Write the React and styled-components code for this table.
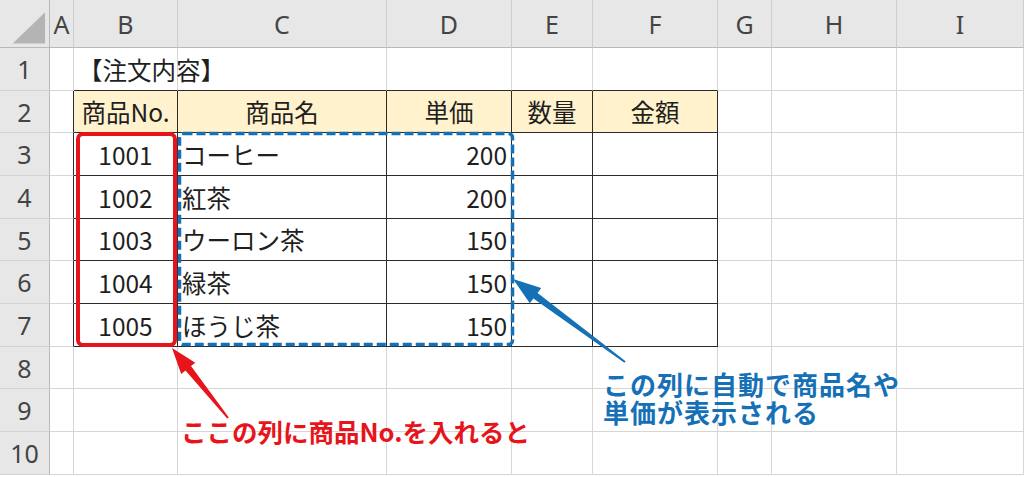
import styled, { createGlobalStyle } from "styled-components";

const GlobalStyle = createGlobalStyle`
  html, body {
    margin: 0;
    padding: 0;
    background: #ffffff;
    overflow: hidden;
  }
  body {
    font-family: "Noto Sans CJK JP", "Noto Sans", sans-serif;
  }
`;

const COLS = ["", "A", "B", "C", "D", "E", "F", "G", "H", "I"];
const COL_WIDTHS = [50, 24, 104, 209, 125, 81, 125, 54, 125, 127];
const ROW_HEIGHTS = [48, 43, 42, 43, 43, 42, 43, 43, 42, 43, 43];

// cell contents keyed by row number, then column index
const DATA = {
  1: { 2: { text: "【注文内容】", align: "left" } },
  2: {
    2: { text: "商品No.", align: "center" },
    3: { text: "商品名", align: "center" },
    4: { text: "単価", align: "center" },
    5: { text: "数量", align: "center" },
    6: { text: "金額", align: "center" },
  },
  3: { 2: { text: "1001" }, 3: { text: "コーヒー" }, 4: { text: "200" } },
  4: { 2: { text: "1002" }, 3: { text: "紅茶" }, 4: { text: "200" } },
  5: { 2: { text: "1003" }, 3: { text: "ウーロン茶" }, 4: { text: "150" } },
  6: { 2: { text: "1004" }, 3: { text: "緑茶" }, 4: { text: "150" } },
  7: { 2: { text: "1005" }, 3: { text: "ほうじ茶" }, 4: { text: "150" } },
};

const ALIGN_BY_COL = { 2: "center", 3: "left", 4: "right" };

const boxed = (r, c) => r >= 2 && r <= 7 && c >= 2 && c <= 6;

const Sheet = styled.div`
  position: relative;
  display: grid;
  grid-template-columns: ${COL_WIDTHS.map((w) => w + "px").join(" ")};
  grid-template-rows: ${ROW_HEIGHTS.map((h) => h + "px").join(" ")};
  width: 1024px;
  height: 477px;
  overflow: hidden;
`;

const Cell = styled.div`
  box-sizing: border-box;
  display: flex;
  align-items: center;
  justify-content: ${(p) =>
    p.$align === "right" ? "flex-end" : p.$align === "center" ? "center" : "flex-start"};
  padding: 0 4px;
  white-space: nowrap;
  overflow: visible;
  font-size: 24.5px;
  color: #1f1f1f;
  background: ${(p) => (p.$gold ? "#fff2cc" : "#ffffff")};
  border-right: 1px solid ${(p) => (p.$darkRight ? "#2a2a2a" : "#d6d6d6")};
  border-bottom: 1px solid ${(p) => (p.$darkBottom ? "#2a2a2a" : "#d6d6d6")};
  position: relative;
  z-index: ${(p) => (p.$overflow ? 1 : 0)};
`;

const ColHead = styled.div`
  box-sizing: border-box;
  display: flex;
  align-items: center;
  justify-content: center;
  background: #e7e7e7;
  color: #444444;
  font-family: "Noto Sans", "Liberation Sans", sans-serif;
  font-size: 25px;
  border-right: 1px solid #cdcdcd;
  border-bottom: 1px solid #b9b9b9;
`;

const RowHead = styled(ColHead)`
  border-right: 1px solid #b9b9b9;
  border-bottom: 1px solid #d2d2d2;
`;

const Corner = styled(ColHead)`
  border-right: 1px solid #b9b9b9;
  padding: 0;
`;

const Overlay = styled.svg`
  position: absolute;
  left: 0;
  top: 0;
  width: 1024px;
  height: 477px;
  pointer-events: none;
  z-index: 2;
`;

const Note = styled.div`
  position: absolute;
  left: ${(p) => p.$x}px;
  top: ${(p) => p.$y}px;
  z-index: 3;
  color: ${(p) => p.$color};
  font-family: "Noto Sans CJK JP", sans-serif;
  font-weight: 700;
  font-size: ${(p) => p.$size}px;
  letter-spacing: ${(p) => p.$spacing || 0}px;
  line-height: 28px;
  white-space: nowrap;
`;

// tapered arrow: wide head at the tip, thin tail
function arrowPoints(tip, tail, headLen, headHalf, shaftHalf, tailHalf) {
  const dx = tail[0] - tip[0];
  const dy = tail[1] - tip[1];
  const len = Math.hypot(dx, dy);
  const ux = dx / len;
  const uy = dy / len;
  const nx = -uy;
  const ny = ux;
  const bx = tip[0] + ux * headLen;
  const by = tip[1] + uy * headLen;
  const pts = [
    [tip[0], tip[1]],
    [bx + nx * headHalf, by + ny * headHalf],
    [bx + nx * shaftHalf, by + ny * shaftHalf],
    [tail[0] + nx * tailHalf, tail[1] + ny * tailHalf],
    [tail[0] - nx * tailHalf, tail[1] - ny * tailHalf],
    [bx - nx * shaftHalf, by - ny * shaftHalf],
    [bx - nx * headHalf, by - ny * headHalf],
  ];
  return pts.map((p) => p.map((v) => v.toFixed(1)).join(",")).join(" ");
}

const RED = "#e8141b";
const BLUE = "#1570b6";

export default function App() {
  const cells = [];
  ROW_HEIGHTS.forEach((_, r) => {
    COLS.forEach((col, c) => {
      const key = `${r}-${c}`;
      if (r === 0) {
        if (c === 0) {
          cells.push(
            <Corner key={key}>
              <svg width="50" height="48" viewBox="0 0 50 48">
                <polygon points="13,44 46,44 46,12" fill="#b4b4b4" />
              </svg>
            </Corner>
          );
        } else {
          cells.push(<ColHead key={key}>{col}</ColHead>);
        }
        return;
      }
      if (c === 0) {
        cells.push(<RowHead key={key}>{r}</RowHead>);
        return;
      }
      const d = DATA[r]?.[c];
      cells.push(
        <Cell
          key={key}
          $align={d?.align || ALIGN_BY_COL[c]}
          $gold={r === 2 && boxed(r, c)}
          $darkRight={boxed(r, c) || boxed(r, c + 1)}
          $darkBottom={boxed(r, c) || boxed(r + 1, c)}
          $overflow={r === 1 && !!d}
        >
          {d?.text}
        </Cell>
      );
    });
  });

  return (
    <>
      <GlobalStyle />
      <Sheet>
        {cells}
        <Overlay viewBox="0 0 1024 477">
          <rect x="78" y="134" width="97" height="211" rx="5" fill="none" stroke={RED} strokeWidth="4" />
          <rect
            x="179.5"
            y="133.5"
            width="333"
            height="211"
            rx="4"
            fill="none"
            stroke={BLUE}
            strokeWidth="3.5"
            strokeDasharray="9 4"
          />
          <polygon points={arrowPoints([172, 348], [228, 418], 26, 9, 3.5, 1)} fill={RED} />
          <polygon points={arrowPoints([513, 279], [625, 362], 28, 9.5, 3.5, 1)} fill={BLUE} />
        </Overlay>
        <Note $x={181} $y={417} $size={25.5} $color={RED}>
          ここの列に商品No.を入れると
        </Note>
        <Note $x={603} $y={370} $size={26} $spacing={1} $color={BLUE}>
          この列に自動で商品名や
          <br />
          単価が表示される
        </Note>
      </Sheet>
    </>
  );
}
